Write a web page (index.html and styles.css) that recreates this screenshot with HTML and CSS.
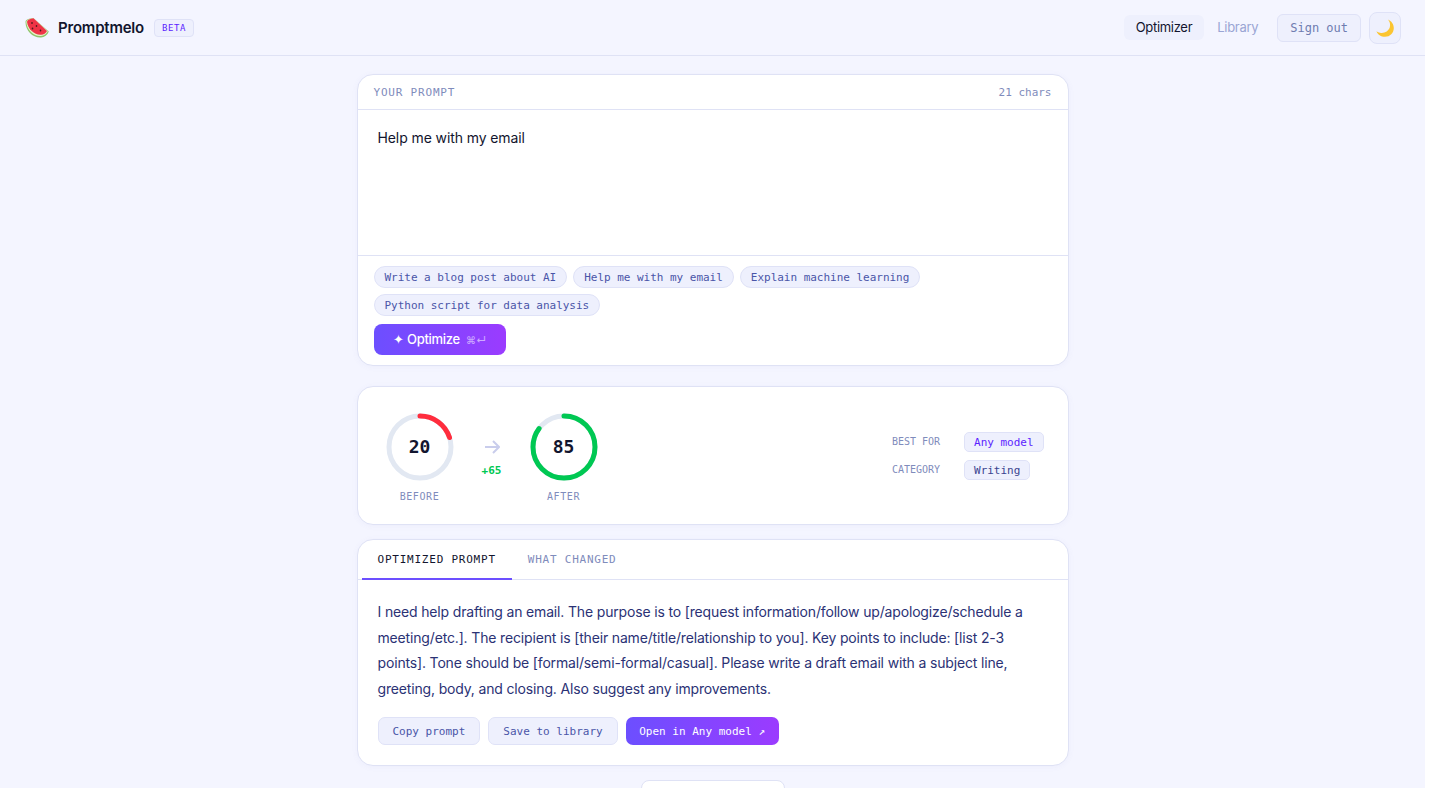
FILE: index.html
```html
<!DOCTYPE html>
<html lang="en">
<head>
    <meta charset="UTF-8">
    <meta name="viewport" content="width=device-width, initial-scale=1.0">
    <title>Promptmelo</title>
    <link rel="stylesheet" href="styles.css">
</head>
<body>

<header class="topbar">
    <div class="brand">
        <svg class="brand-icon" viewBox="0 0 24 20" width="24" height="20" aria-hidden="true">
            <path d="M0.500 4C0.500 13 8 20 16 19.500C19.500 19.300 22.500 17 23.800 13.500L8.500 0.300C4 0.500 0.700 1.500 0.500 4Z" fill="#8fc46a"/>
            <path d="M1.300 4C2 12.500 9 18.500 16 17.900C19 17.600 21.500 15.800 22.800 13.200L8.500 0.300C4.500 0.700 1.500 1.800 1.300 4Z" fill="#e8f2c8"/>
            <path d="M2 3.800C3 11.500 9.500 17.200 16 16.800C18.800 16.500 20.800 15 22 12.900L8.500 0.300C5 0.800 2.200 2 2 3.800Z" fill="#ef3346"/>
            <g fill="#4a1c1c">
                <ellipse cx="7" cy="5" rx="0.800" ry="1.100"/>
                <ellipse cx="11.500" cy="8" rx="0.800" ry="1.100"/>
                <ellipse cx="7.500" cy="10.500" rx="0.800" ry="1.100"/>
                <ellipse cx="15.500" cy="12.500" rx="0.800" ry="1.100"/>
            </g>
        </svg>
        <span class="brand-name">Promptmelo</span>
        <span class="beta">BETA</span>
    </div>
    <nav class="nav">
        <a class="nav-link active">Optimizer</a>
        <a class="nav-link">Library</a>
        <button class="signout">Sign out</button>
        <button class="theme-btn" aria-label="Toggle theme">
            <svg viewBox="0 0 20 20" width="20" height="20" aria-hidden="true">
                <path d="M13 1.500C14.800 3.500 15.600 6.500 14.800 9.300C13.600 13.300 9 15.800 5 14.800C3.600 14.500 2.400 14 1.500 13.200C2.600 16.300 6 18.800 10 18.800C15 18.800 18.800 15 18.800 10C18.800 6.300 16.400 3 13 1.500Z" fill="#fbc531"/>
            </svg>
        </button>
    </nav>
</header>

<main class="content">
    <section class="card">
        <div class="input-head">
            <span class="input-label">YOUR PROMPT</span>
            <span class="char-count">21 chars</span>
        </div>
        <div class="input-text">Help me with my email</div>
        <div class="input-foot">
            <div class="chips">
                <span class="chip">Write a blog post about AI</span>
                <span class="chip">Help me with my email</span>
                <span class="chip">Explain machine learning</span>
                <span class="chip">Python script for data analysis</span>
            </div>
            <button class="btn-optimize">✦ Optimize <span class="kbd">⌘↵</span></button>
        </div>
    </section>

    <section class="card score-card">
        <div class="scores">
            <div class="score">
                <div class="ring">
                    <svg viewBox="0 0 68 68" width="68" height="68" aria-hidden="true">
                        <circle cx="34" cy="34" r="31" class="ring-track"/>
                        <circle cx="34" cy="34" r="31" class="ring-value" stroke="#ff2d3d" stroke-dasharray="39 195"/>
                    </svg>
                    <span class="ring-num">20</span>
                </div>
                <div class="score-label">BEFORE</div>
            </div>
            <div class="delta">
                <svg viewBox="0 0 16 14" width="16" height="14" aria-hidden="true">
                    <path d="M1 7H15M9 1L15 7L9 13" fill="none" stroke="#c9cdec" stroke-width="2"/>
                </svg>
                <span class="delta-num">+65</span>
            </div>
            <div class="score">
                <div class="ring">
                    <svg viewBox="0 0 68 68" width="68" height="68" aria-hidden="true">
                        <circle cx="34" cy="34" r="31" class="ring-track"/>
                        <circle cx="34" cy="34" r="31" class="ring-value" stroke="#00c853" stroke-dasharray="165.600 195"/>
                    </svg>
                    <span class="ring-num">85</span>
                </div>
                <div class="score-label">AFTER</div>
            </div>
        </div>
        <div class="meta">
            <span class="meta-label">BEST FOR</span>
            <span class="meta-pill model">Any model</span>
            <span class="meta-label">CATEGORY</span>
            <span class="meta-pill">Writing</span>
        </div>
    </section>

    <section class="card result-card">
        <div class="tabs">
            <button class="tab active">OPTIMIZED PROMPT</button>
            <button class="tab">WHAT CHANGED</button>
        </div>
        <div class="result-body">
            <p class="result-text">I need help drafting an email. The purpose is to [request information/follow up/apologize/schedule a meeting/etc.]. The recipient is [their name/title/relationship to you]. Key points to include: [list 2-3 points]. Tone should be [formal/semi-formal/casual]. Please write a draft email with a subject line, greeting, body, and closing. Also suggest any improvements.</p>
            <div class="actions">
                <button class="btn">Copy prompt</button>
                <button class="btn">Save to library</button>
                <button class="btn btn-primary">Open in Any model ↗</button>
            </div>
        </div>
    </section>

    <div class="more">
        <button class="btn-more" aria-label="More"></button>
    </div>
</main>

</body>
</html>
```
FILE: styles.css
```css
* { box-sizing: border-box; }
html { height: 100%; background: #fff; overflow: hidden; }
body { margin: 0; width: 1425px; height: 788px; overflow: hidden; background: #f4f5ff; font-family: "Inter", sans-serif; color: #12152e; }
button { font-family: inherit; cursor: pointer; }

.topbar { height: 56px; display: flex; align-items: center; justify-content: space-between; padding: 0 24px 0 25px; border-bottom: 1px solid #dfe2f5; }
.brand { display: flex; align-items: center; }
.brand-icon { margin-right: 9px; }
.brand-name { font-size: 15px; font-weight: 600; letter-spacing: -0.2px; color: #12152e; margin-right: 10px; }
.beta { font-family: "DejaVu Sans Mono", monospace; font-size: 9px; letter-spacing: 0.6px; color: #5b1fff; background: #eef0fd; border: 1px solid #dfe2f7; border-radius: 4px; padding: 3px 7px; }
.nav { display: flex; align-items: center; }
.nav-link { font-size: 13px; letter-spacing: -0.3px; height: 25px; line-height: 25px; padding: 0 12px; border-radius: 6px; color: #9aa5d4; margin-right: 1px; }
.signout { font-family: "DejaVu Sans Mono", monospace; font-size: 12px; height: 28px; padding: 0 12px; margin-left: 6px; color: #6f7cb0; background: #eef0fd; border: 1px solid #dfe2f7; border-radius: 6px; }
.nav-link.active { background: #eef0fd; color: #12152e; }
.theme-btn { width: 32px; height: 32px; margin-left: 8px; padding: 0; display: flex; align-items: center; justify-content: center; background: #eef0fd; border: 1px solid #dfe2f7; border-radius: 8px; }

.content { width: 712px; margin: 0 auto; padding-top: 18px; }
.card { background: #fff; border: 1px solid #dfe2f5; border-radius: 16px; box-shadow: 0 1px 6px rgba(90, 90, 200, 0.05); overflow: hidden; }

.input-head { height: 35px; display: flex; align-items: center; justify-content: space-between; padding: 0 16px; border-bottom: 1px solid #dfe2f5; }
.input-label { font-family: "DejaVu Sans Mono", monospace; font-size: 11px; letter-spacing: 0.8px; color: #7f8cbc; }
.char-count { font-family: "DejaVu Sans Mono", monospace; font-size: 11px; color: #7f8cbc; }
.input-text { height: 146px; padding: 19px 20px; font-size: 14px; letter-spacing: -0.1px; line-height: 17px; color: #12152e; border-bottom: 1px solid #dfe2f5; }
.input-foot { padding: 10px 16px; }
.chips { display: flex; flex-wrap: wrap; gap: 6px; }
.chip { font-family: "DejaVu Sans Mono", monospace; font-size: 11px; letter-spacing: -0.02px; height: 22px; line-height: 21px; padding: 0 10px; color: #4a55a8; background: #eef0fd; border: 1px solid #dfe2f7; border-radius: 11px; }
.btn-optimize { display: block; margin-top: 8px; width: 132px; height: 31px; padding: 0 0 2px; border: none; border-radius: 8px; font-size: 13px; font-weight: 500; letter-spacing: -0.3px; color: #fff; background: linear-gradient(90deg, #6c4fff, #9b3bff); }
.kbd { font-size: 10px; margin-left: 3px; opacity: 0.55; letter-spacing: 0; }

.score-card { margin-top: 20px; height: 139px; display: flex; align-items: flex-start; justify-content: space-between; padding: 26px 24px 0 28px; }
.scores { display: flex; }
.score { display: flex; flex-direction: column; align-items: center; width: 68px; }
.ring { position: relative; width: 68px; height: 68px; }
.ring svg { display: block; transform: rotate(-90deg); }
.ring-track { fill: none; stroke: #e2e8f2; stroke-width: 5; }
.ring-value { fill: none; stroke-width: 5; stroke-linecap: round; }
.ring-num { position: absolute; inset: 0; padding-bottom: 2px; display: flex; align-items: center; justify-content: center; font-family: "DejaVu Sans Mono", monospace; font-size: 18px; font-weight: 700; color: #12152e; }
.score-label { margin-top: 9px; font-family: "DejaVu Sans Mono", monospace; font-size: 10px; letter-spacing: 0.6px; line-height: 13px; color: #7f8cbc; }
.delta { width: 20px; margin: 0 28px; display: flex; flex-direction: column; align-items: center; gap: 10px; padding-top: 27px; }
.delta svg { display: block; }
.delta-num { font-family: "DejaVu Sans Mono", monospace; font-size: 11px; font-weight: 700; line-height: 13px; color: #00c853; }
.meta { display: grid; grid-template-columns: auto auto; column-gap: 24px; row-gap: 8px; align-items: center; justify-items: start; margin-top: 19px; }
.meta-label { font-family: "DejaVu Sans Mono", monospace; font-size: 10px; padding-bottom: 2px; color: #7f8cbc; }
.meta-pill { font-family: "DejaVu Sans Mono", monospace; font-size: 11px; letter-spacing: -0.02px; height: 20px; line-height: 19px; padding: 0 9px; color: #3a4490; background: #eef0fd; border: 1px solid #dfe2f7; border-radius: 5px; }
.meta-pill.model { color: #5b1fff; }

.result-card { margin-top: 14px; }
.tabs { display: flex; height: 40px; padding-left: 4px; border-bottom: 1px solid #dfe2f5; }
.tab { height: 40px; padding: 0 16px; background: none; border: none; border-bottom: 2px solid transparent; font-family: "DejaVu Sans Mono", monospace; font-size: 11px; letter-spacing: 0.77px; color: #7f8cbc; }
.tab.active { color: #12152e; border-bottom-color: #6c4fff; }
.result-body { padding: 19px 20px 20px; }
.result-text { margin: 0; font-size: 14px; letter-spacing: -0.16px; line-height: 25.5px; color: #2b3275; }
.actions { display: flex; gap: 8px; margin-top: 16px; }
.btn { height: 28px; padding: 0 14px; font-family: "DejaVu Sans Mono", monospace; font-size: 11px; color: #4a55a8; background: #eef0fd; border: 1px solid #dfe2f7; border-radius: 7px; }
.btn-primary { padding: 0 13.5px; color: #fff; border: none; background: linear-gradient(90deg, #6c4fff, #9b3bff); font-weight: 500; }

.more { display: flex; justify-content: center; margin-top: 14px; }
.btn-more { width: 144px; height: 32px; background: #fff; border: 1px solid #dfe2f5; border-radius: 8px; }
```
